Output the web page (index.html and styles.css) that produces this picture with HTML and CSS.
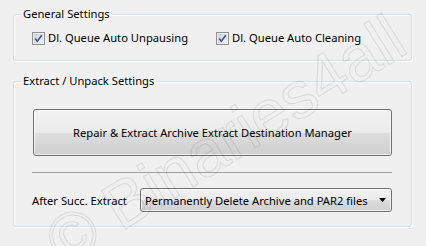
FILE: index.html
```html
<!DOCTYPE html>
<html lang="en">
<head>
  <meta charset="UTF-8" />
  <title>Settings</title>
  <link rel="stylesheet" href="styles.css">
</head>
<body>
  <div class="panel">
    <fieldset class="group group-general">
      <legend>General Settings</legend>
      <div class="check-row">
        <label class="check">
          <svg class="box" width="13" height="13" viewBox="0 0 13 13">
            <defs>
              <linearGradient id="cbg" x1="0" y1="0" x2="1" y2="1">
                <stop offset="0" stop-color="#cfd3d8"/>
                <stop offset="1" stop-color="#f6f7f8"/>
              </linearGradient>
            </defs>
            <rect x="0.5" y="0.5" width="12" height="12" fill="#fff" stroke="#8e8f8f"/>
            <rect x="2" y="2" width="9" height="9" fill="url(#cbg)" stroke="#c3c8ce" stroke-width="0.6"/>
            <path d="M3.2 6.6 L5.3 9.2 L9.8 3.2" fill="none" stroke="#3d4f8a" stroke-width="1.6"/>
          </svg>
          <span>Dl. Queue Auto Unpausing</span>
        </label>
        <label class="check">
          <svg class="box" width="13" height="13" viewBox="0 0 13 13">
            <rect x="0.5" y="0.5" width="12" height="12" fill="#fff" stroke="#8e8f8f"/>
            <rect x="2" y="2" width="9" height="9" fill="url(#cbg)" stroke="#c3c8ce" stroke-width="0.6"/>
            <path d="M3.2 6.6 L5.3 9.2 L9.8 3.2" fill="none" stroke="#3d4f8a" stroke-width="1.6"/>
          </svg>
          <span>Dl. Queue Auto Cleaning</span>
        </label>
      </div>
    </fieldset>

    <fieldset class="group group-extract">
      <legend>Extract / Unpack Settings</legend>
      <button type="button" class="big-button">Repair &amp; Extract Archive Extract Destination Manager</button>
      <div class="separator"></div>
      <div class="after-row">
        <span class="after-label">After Succ. Extract</span>
        <div class="dropdown">
          <span>Permanently Delete Archive and PAR2 files</span>
          <svg width="7" height="4" viewBox="0 0 7 4"><path d="M0 0 H7 L3.5 4 Z" fill="#000"/></svg>
        </div>
      </div>
    </fieldset>

    <div class="watermark">© Binaries4all</div>
  </div>
</body>
</html>
```

FILE: styles.css
```css
* {
  box-sizing: border-box;
}

body {
  margin: 0;
  background: #f0f0f0;
  font-family: 'Noto Sans', sans-serif;
  font-size: 11.2px;
  color: #000;
}

.panel {
  position: relative;
  width: 426px;
  height: 246px;
  overflow: hidden;
  padding-top: 6px;
}

.group {
  margin: 0 14px 0 13px;
  border: 1px solid #d5dfe5;
  border-radius: 3px;
  box-shadow: inset 1px 1px 0 #fff, 1px 1px 0 #fff;
  padding: 0 19px;
  min-width: 0;
}

.group legend {
  margin-left: -12px;
  padding: 0 2px;
  line-height: 16px;
}

.group-general {
  padding-top: 8px;
  padding-bottom: 14px;
}

.check-row {
  display: flex;
  margin-left: -1px;
  white-space: nowrap;
}

.check {
  display: flex;
  align-items: center;
  gap: 3px;
  line-height: 16px;
}

.check + .check {
  margin-left: 28px;
}

.box {
  display: block;
  flex-shrink: 0;
}

.group-extract {
  margin-top: 12px;
  padding-top: 20px;
  padding-bottom: 14px;
}

.big-button {
  display: block;
  width: 100%;
  height: 47px;
  font: inherit;
  color: #000;
  border: 1px solid #707070;
  border-radius: 3px;
  background: linear-gradient(#f2f2f2, #ebebeb 50%, #dddddd 51%, #cfcfcf);
  box-shadow: inset 0 0 0 1px rgba(255,255,255,0.7);
  padding: 0;
}

.separator {
  margin-top: 16px;
  height: 1px;
  background: #a0a0a0;
  margin-left: -1px;
}

.after-row {
  margin-top: 15px;
  display: flex;
  align-items: center;
  margin-left: -1px;
  white-space: nowrap;
}

.dropdown {
  margin-left: auto;
  width: 252px;
  height: 24px;
  display: flex;
  align-items: center;
  justify-content: space-between;
  padding: 0 5px 0 4px;
  border: 1px solid #707070;
  border-radius: 3px;
  background: linear-gradient(#f2f2f2, #ebebeb 50%, #dddddd 51%, #cfcfcf);
  box-shadow: inset 0 0 0 1px rgba(255,255,255,0.7);
}

.watermark {
  position: absolute;
  left: 52px;
  top: 212px;
  font-family: 'Liberation Sans', sans-serif;
  font-size: 66px;
  line-height: 72px;
  white-space: nowrap;
  color: transparent;
  -webkit-text-stroke: 1.2px rgba(0,0,0,0.09);
  transform: rotate(-32deg);
  transform-origin: left center;
  pointer-events: none;
}
```
